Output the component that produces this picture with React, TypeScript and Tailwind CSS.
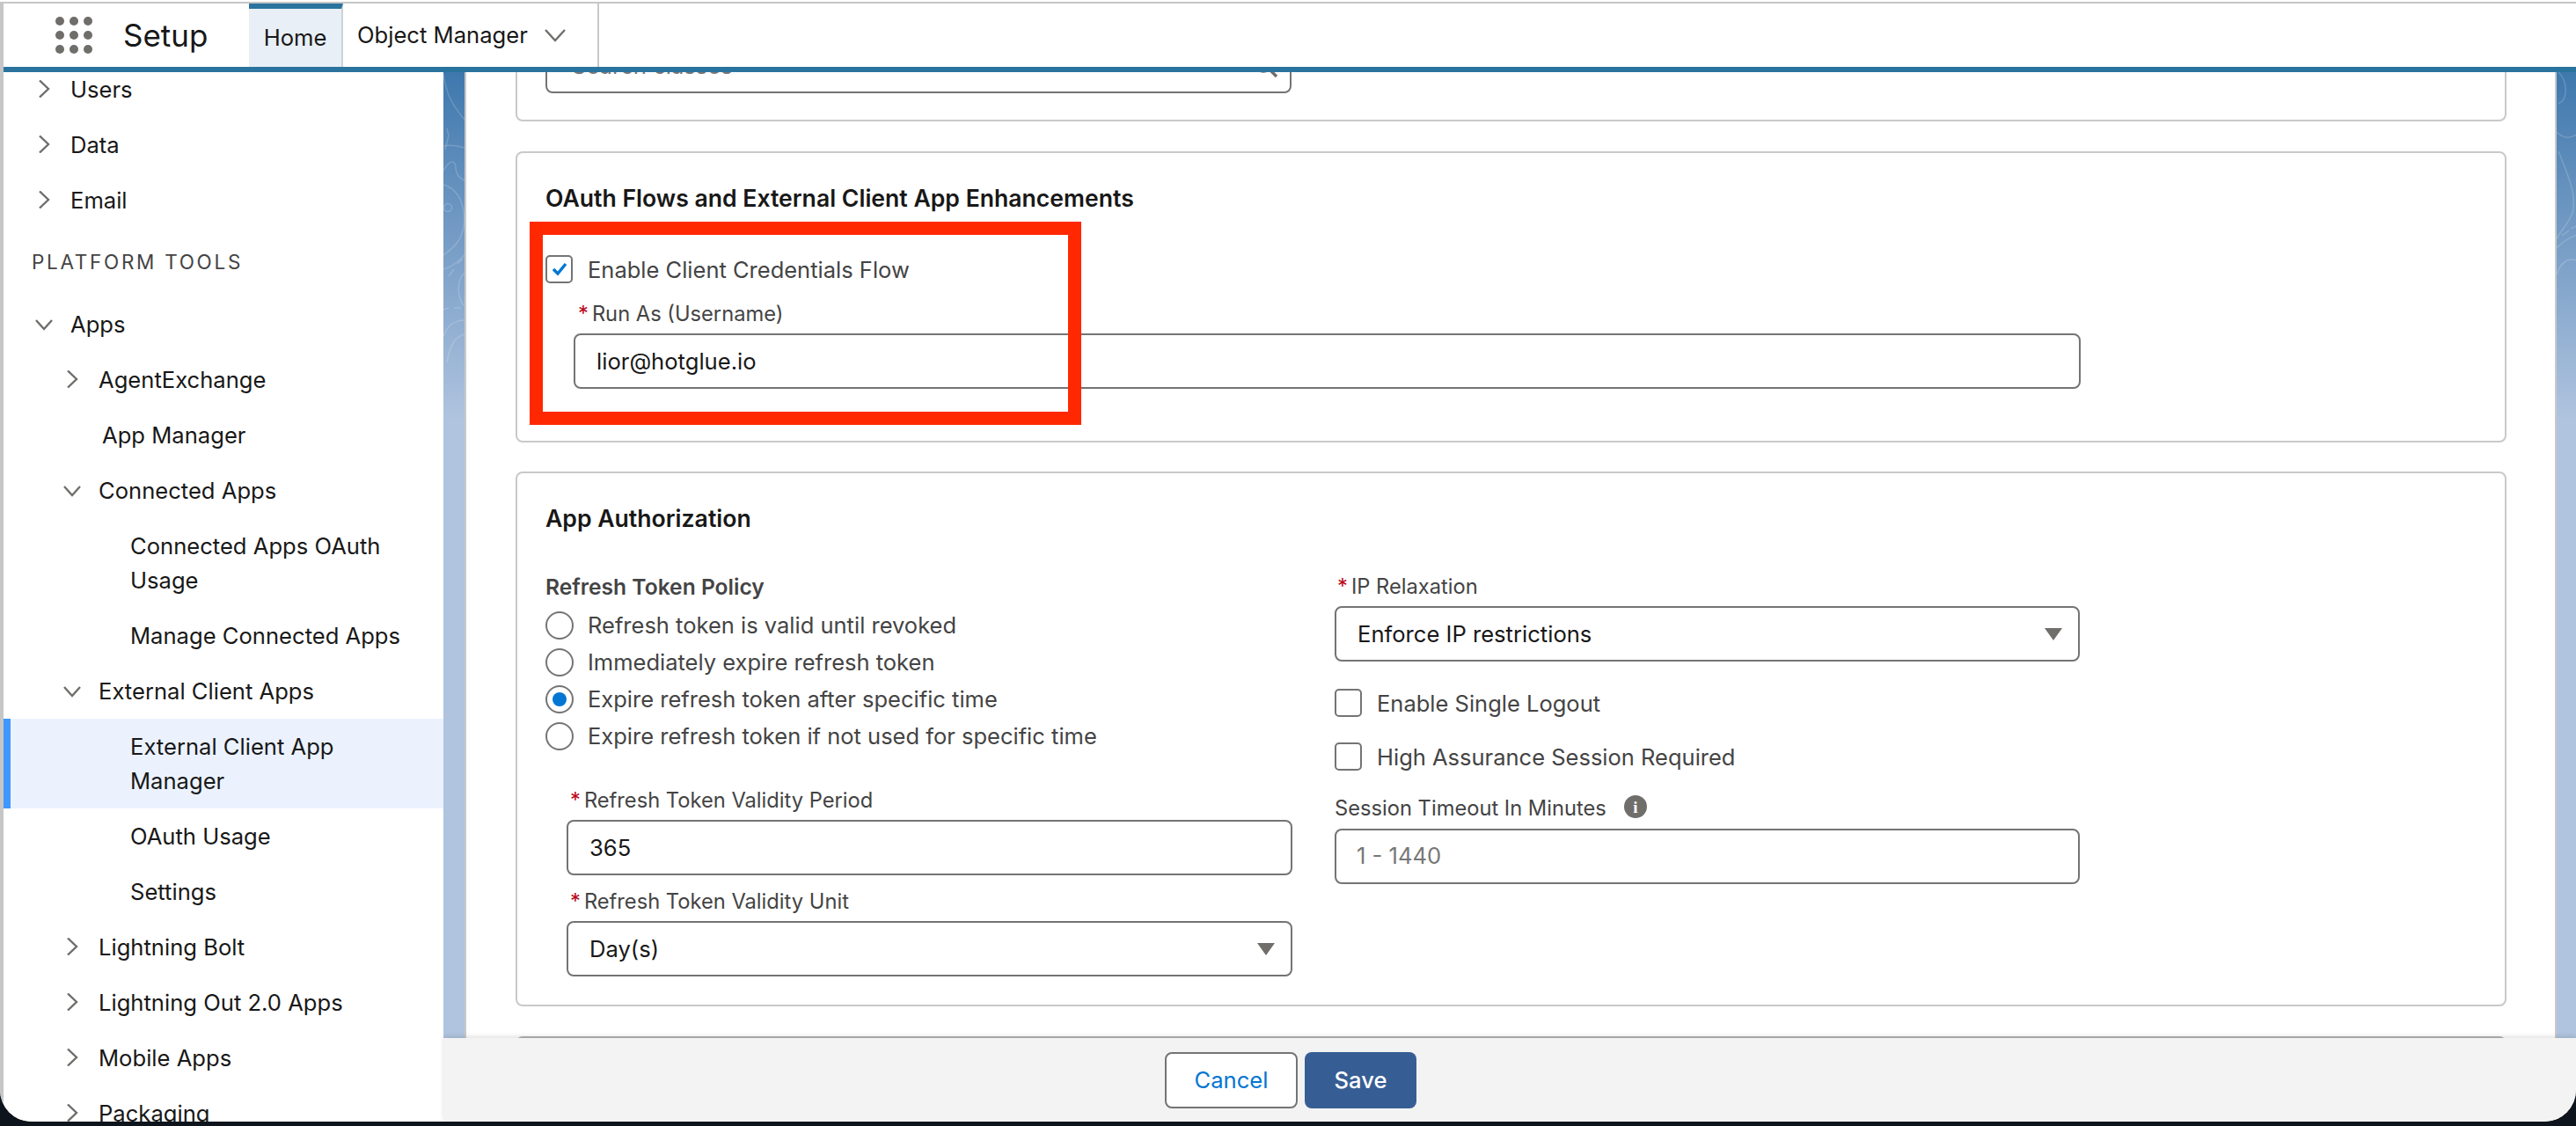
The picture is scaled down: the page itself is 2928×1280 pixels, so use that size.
import React from "react";

function Chevron({ down }: { down?: boolean }) {
  return (
    <svg width="20" height="20" viewBox="0 0 20 20" fill="none" className="shrink-0 text-[#706e6b]">
      {down ? (
        <path d="M1 6 L10 16 L19 6" stroke="currentColor" strokeWidth="2.4" />
      ) : (
        <path d="M5 0.5 L15 10 L5 19.5" stroke="currentColor" strokeWidth="2.4" />
      )}
    </svg>
  );
}

function NavRow({ label, level, chevron }: { label: string; level: 0 | 1; chevron: "right" | "down" }) {
  return (
    <div className={level === 0 ? "flex h-[63px] shrink-0 items-center gap-[20px] pl-[36px]" : "flex h-[63px] shrink-0 items-center gap-[20px] pl-[68px]"}>
      <Chevron down={chevron === "down"} />
      <span>{label}</span>
    </div>
  );
}

function LeafRow({ children, indent }: { children: React.ReactNode; indent: "mid" | "deep" }) {
  return (
    <div className={indent === "mid" ? "shrink-0 py-[12px] pl-[112px] pr-[40px]" : "shrink-0 py-[12px] pl-[144px] pr-[40px]"}>{children}</div>
  );
}

function Sidebar() {
  return (
    <div className="flex h-full w-[500px] shrink-0 flex-col overflow-hidden bg-white text-[25.6px] leading-[39px] text-[#181818]">
      <div className="-mt-[12.5px] flex flex-col">
        <NavRow label="Users" level={0} chevron="right" />
        <NavRow label="Data" level={0} chevron="right" />
        <NavRow label="Email" level={0} chevron="right" />
        <div className="flex h-[78px] shrink-0 items-center pl-[32px] text-[22.5px] tracking-[2.7px] text-[#444444]">PLATFORM TOOLS</div>
        <NavRow label="Apps" level={0} chevron="down" />
        <NavRow label="AgentExchange" level={1} chevron="right" />
        <LeafRow indent="mid">App Manager</LeafRow>
        <NavRow label="Connected Apps" level={1} chevron="down" />
        <LeafRow indent="deep">
          Connected Apps OAuth
          <br />
          Usage
        </LeafRow>
        <LeafRow indent="deep">Manage Connected Apps</LeafRow>
        <NavRow label="External Client Apps" level={1} chevron="down" />
        <div className="shrink-0 border-l-8 border-[#3f97ff] bg-[#ebf2fe] py-[12px] pl-[136px]">
          External Client App
          <br />
          Manager
        </div>
        <LeafRow indent="deep">OAuth Usage</LeafRow>
        <LeafRow indent="deep">Settings</LeafRow>
        <NavRow label="Lightning Bolt" level={1} chevron="right" />
        <NavRow label="Lightning Out 2.0 Apps" level={1} chevron="right" />
        <NavRow label="Mobile Apps" level={1} chevron="right" />
        <NavRow label="Packaging" level={1} chevron="right" />
      </div>
    </div>
  );
}

function Strip({ mirror }: { mirror?: boolean }) {
  return (
    <div className={mirror ? "h-full w-[22px] shrink-0 overflow-hidden bg-linear-to-b from-[#3e78ad] to-[#b0c4df] to-[36%]" : "h-full w-[24px] shrink-0 overflow-hidden bg-linear-to-b from-[#3e78ad] to-[#b0c4df] to-[36%]"}>
      <svg width="24" height="400" viewBox="0 0 24 400" fill="none" stroke="white" strokeOpacity="0.18" strokeWidth="1.5">
        {mirror ? (
          <>
            <path d="M2 0 C12 10 14 30 2 36" />
            <path d="M0 68 C8 76 16 76 24 70" />
            <path d="M2 90 C10 110 24 140 18 160 C12 175 4 180 0 190" />
            <path d="M6 186 L14 180 M16 178 L24 174" />
            <path d="M0 200 C10 190 20 186 24 185" />
            <path d="M0 230 C6 212 16 212 24 214" />
          </>
        ) : (
          <>
            <path d="M0 2 C3 28 14 42 24 54" />
            <path d="M4 64 L6 72 L2 88" />
            <path d="M0 84 C10 82 18 84 24 86" />
            <path d="M0 112 C8 98 14 100 14 110 C16 122 22 120 24 124" />
            <path d="M0 128 C16 132 26 150 23 176 C20 194 8 202 0 208" />
            <circle cx="5" cy="154" r="4.5" />
            <path d="M0 224 C10 222 18 214 24 208" />
            <path d="M6 232 L12 224 M16 218 L22 212" />
            <path d="M24 228 C14 238 16 258 24 266" />
            <path d="M0 270 L6 268 M12 268 L20 268" />
            <path d="M0 300 C6 284 16 282 24 282" />
            <path d="M4 330 C8 306 16 300 24 298" />
          </>
        )}
      </svg>
    </div>
  );
}

function Req({ label, indent }: { label: string; indent: "a" | "b" | "c" }) {
  const cls =
    indent === "a"
      ? "flex h-[32px] items-center pl-[37px] text-[23.7px] text-[#444444]"
      : indent === "b"
        ? "flex h-[32px] items-center pl-[28px] text-[23.7px] text-[#444444]"
        : "flex h-[32px] items-center pl-[3px] text-[23.7px] text-[#444444]";
  return (
    <div className={cls}>
      <span className="mr-[4px] text-[#ba0517]">*</span>
      <span>{label}</span>
    </div>
  );
}

function Box({ children, select, className }: { children?: React.ReactNode; select?: boolean; className: string }) {
  return (
    <div className={"flex h-[63px] items-center justify-between rounded-[8px] border-2 border-[#747474] bg-white pl-[24px] pr-[18px] text-[25.6px] text-[#181818] " + className}>
      <span className="pt-[1px]">{children}</span>
      {select && (
        <svg width="20" height="14" viewBox="0 0 20 14" className="shrink-0">
          <path d="M0 0 H20 L10 14 Z" fill="#706e6b" />
        </svg>
      )}
    </div>
  );
}

function Radio({ label, on }: { label: string; on?: boolean }) {
  return (
    <div className="flex h-[42px] items-center gap-[16px] text-[25.5px] text-[#444444]">
      <span className="flex h-[32px] w-[32px] shrink-0 items-center justify-center rounded-full border-2 border-[#747474] bg-white">
        {on && <span className="h-[16px] w-[16px] rounded-full bg-[#0176d3]" />}
      </span>
      <span>{label}</span>
    </div>
  );
}

function Check({ label, on }: { label: string; on?: boolean }) {
  return (
    <div className="flex h-[32px] items-center gap-[17px] text-[25.5px] text-[#444444]">
      <span className="flex h-[32px] w-[31px] shrink-0 items-center justify-center rounded-[5px] border-2 border-[#747474] bg-white">
        {on && (
          <svg width="18" height="16" viewBox="0 0 18 16" fill="none">
            <path d="M2 8 L7 13 L16 2" stroke="#0176d3" strokeWidth="3.4" />
          </svg>
        )}
      </span>
      <span className="pt-[2px]">{label}</span>
    </div>
  );
}

function Main() {
  return (
    <div className="flex h-full min-w-0 flex-1 flex-col overflow-hidden border-x-2 border-[#c9c9c9] bg-white pl-[56px] pr-[55px]">
      {/* scrolled-away card */}
      <div className="-mt-[144px] h-[200px] shrink-0 rounded-[8px] border-2 border-[#c9c9c9] pl-[32px] pt-[104px]">
        <div className="flex h-[62px] w-[848px] items-center justify-between rounded-[8px] border-2 border-[#747474] pl-[28px] pr-[12px] text-[25.6px] text-[#777777]">
          <span>Search classes</span>
          <svg width="30" height="30" viewBox="0 0 30 30" fill="none" stroke="#706e6b" strokeWidth="3.4">
            <circle cx="12" cy="12" r="9" />
            <path d="M19 19 L27 27" />
          </svg>
        </div>
      </div>

      {/* OAuth flows */}
      <div className="relative mt-[34px] h-[331px] shrink-0 rounded-[8px] border-2 border-[#c9c9c9] pl-[32px] pt-[32px]">
        <h2 className="text-[26.6px] font-semibold leading-[39px] text-[#181818]">OAuth Flows and External Client App Enhancements</h2>
        <div className="mt-[45px]">
          <Check label="Enable Client Credentials Flow" on />
        </div>
        <div className="mt-[19px]">
          <Req label="Run As (Username)" indent="a" />
        </div>
        <Box className="ml-[32px] mt-[6px] w-[1713px]">lior@hotglue.io</Box>
        <div className="absolute left-[14px] top-[78px] h-[231px] w-[627px] border-[15px] border-[#ff2800]" />
      </div>

      {/* App authorization */}
      <div className="mt-[33px] h-[608px] shrink-0 rounded-[8px] border-2 border-[#c9c9c9] pl-[32px] pt-[32px]">
        <h2 className="text-[26.6px] font-semibold leading-[39px] text-[#181818]">App Authorization</h2>
        <div className="mt-[42px] flex gap-[48px]">
          <div className="w-[849px] shrink-0">
            <div className="flex h-[32px] items-center text-[24.6px] font-semibold text-[#444444]">Refresh Token Policy</div>
            <div className="mt-[7px] flex flex-col">
              <Radio label="Refresh token is valid until revoked" />
              <Radio label="Immediately expire refresh token" on={false} />
              <Radio label="Expire refresh token after specific time" on />
              <Radio label="Expire refresh token if not used for specific time" />
            </div>
            <div className="mt-[36px]">
              <Req label="Refresh Token Validity Period" indent="b" />
            </div>
            <Box className="ml-[24px] mt-[6px] w-[825px]">365</Box>
            <div className="mt-[14px]">
              <Req label="Refresh Token Validity Unit" indent="b" />
            </div>
            <Box select className="ml-[24px] mt-[6px] w-[825px]">Day(s)</Box>
          </div>
          <div className="w-[847px] shrink-0">
            <Req label="IP Relaxation" indent="c" />
            <Box select className="mt-[6px] w-[847px]">Enforce IP restrictions</Box>
            <div className="mt-[31px] flex flex-col gap-[29px]">
              <Check label="Enable Single Logout" />
              <Check label="High Assurance Session Required" />
            </div>
            <div className="mt-[27px] flex h-[32px] items-center gap-[20px] text-[23.7px] text-[#444444]">
              <span>Session Timeout In Minutes</span>
              <span className="-mt-[4px] flex h-[26px] w-[26px] items-center justify-center rounded-full bg-[#706e6b] font-[Liberation_Serif,serif] text-[19px] font-bold leading-none text-white">i</span>
            </div>
            <div className="mt-[7px] flex h-[63px] w-[847px] items-center rounded-[8px] border-2 border-[#747474] bg-white pl-[23px] text-[25.6px] text-[#777777]">1 - 1440</div>
          </div>
        </div>
      </div>

      <div className="mt-[34px] h-[100px] shrink-0 rounded-[8px] border-2 border-[#b5b5b5]" />
    </div>
  );
}

export default function App() {
  return (
    <div className="h-[1280px] w-[2928px] overflow-hidden bg-[#0d141c] font-[Inter,sans-serif]">
      <div className="h-[1275px] overflow-hidden rounded-b-[36px] bg-white pt-[2px]">
        <div className="flex h-[1273px] flex-col border-l-4 border-t-2 border-[#c6c6c6]">
          {/* header */}
          <header className="relative z-10 flex h-[78px] shrink-0 items-stretch border-b-[6px] border-[#2a739e] bg-white">
            <div className="flex w-[279px] shrink-0 items-center">
              <div className="ml-[59px] grid w-[42px] grid-cols-3 gap-[6px]">
                {[0, 1, 2, 3, 4, 5, 6, 7, 8].map((i) => (
                  <span key={i} className="h-[10px] w-[10px] rounded-full bg-[#706e6b]" />
                ))}
              </div>
              <span className="ml-[35px] text-[35px] text-[#181818]">Setup</span>
            </div>
            <div className="flex w-[107px] shrink-0 items-center justify-center border-r-2 border-t-[6px] border-[#c9d3dc] border-t-[#2a739e] bg-[#e8eff6] text-[25.6px] text-[#181818]">Home</div>
            <div className="flex w-[291px] shrink-0 items-center gap-[19px] border-r-2 border-[#c9c9c9] pl-[16px] text-[25.6px] text-[#181818]">
              <span>Object Manager</span>
              <svg width="24" height="16" viewBox="0 0 24 16" fill="none">
                <path d="M1 2 L12 14 L23 2" stroke="#706e6b" strokeWidth="2.4" />
              </svg>
            </div>
          </header>

          <div className="flex min-h-0 flex-1">
            <Sidebar />
            <div className="flex min-w-0 flex-1 flex-col">
              <div className="flex h-[1098px] shrink-0">
                <Strip />
                <Main />
                <Strip mirror />
              </div>
              <footer className="relative flex flex-1 items-start justify-center gap-[8px] bg-[#f3f3f3] pr-[498px] pt-[16px] shadow-[0_-2px_5px_rgba(0,0,0,0.12)]">
                <div className="flex h-[64px] w-[151px] items-center justify-center rounded-[8px] border-2 border-[#747474] bg-white text-[25.6px] text-[#0176d3]">Cancel</div>
                <div className="flex h-[64px] w-[127px] items-center justify-center rounded-[8px] bg-[#375e94] text-[25.6px] font-medium text-white">Save</div>
              </footer>
            </div>
          </div>
        </div>
      </div>
    </div>
  );
}
